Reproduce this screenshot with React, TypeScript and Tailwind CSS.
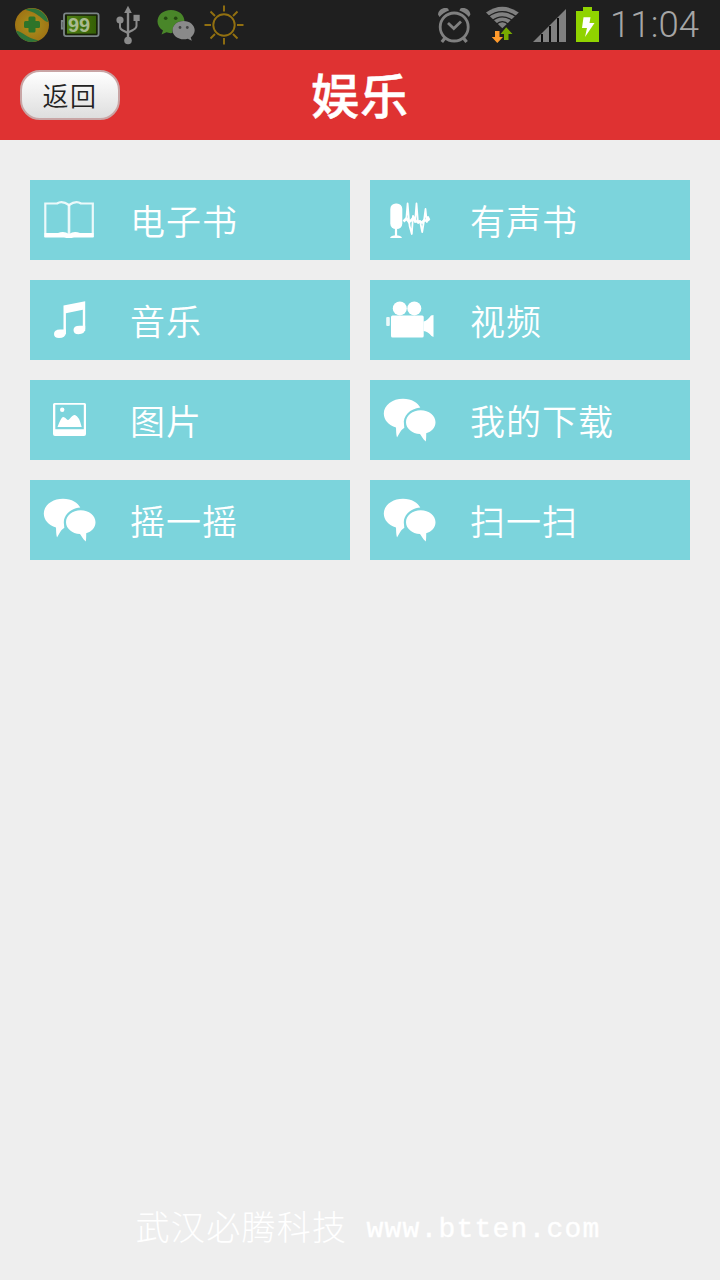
import React from 'react';

interface MenuItem {
  id: string;
  label: string;
  icon: React.ReactNode;
}

function BookIcon() {
  return (
    <svg width="80" height="80" viewBox="0 0 80 80" fill="none" stroke="#fff">
      <path d="M15.3 23.5 H27 Q32 20 39 25 Q46 20 51 23.5 H62.8 V56 H15.3 Z" strokeWidth="2.2" opacity="0.85" />
      <path d="M39 24.5 V55" strokeWidth="2.6" opacity="0.85" />
      <path d="M14.5 53 H28 Q34 50.5 39 54 Q44 50.5 50 53 H63.5 V57.5 H44 Q39 58.6 34 57.5 H14.5 Z" fill="#fff" stroke="none" />
    </svg>
  );
}

function AudioBookIcon() {
  return (
    <svg width="80" height="80" viewBox="0 0 80 80" fill="none" stroke="#fff">
      <rect x="20.3" y="23.5" width="12" height="25.5" rx="5.5" fill="#fff" stroke="none" />
      <path d="M26 48 V57" strokeWidth="2.2" />
      <path d="M20 58 Q21 55.3 26 55.3 Q31 55.3 32 58 Z" fill="#fff" stroke="none" />
      <path
        d="M34 41 L36.4 38 L37.6 23.5 L38.8 38 L39.6 46 L41.8 54 L43 36 L45 42 L46.5 23.5 L48 43 L50 41 L52.2 52 L53.8 42 L55.5 29 L56.8 42 L58 37 L59.5 40"
        strokeWidth="1.8"
        strokeLinejoin="round"
      />
      <path d="M33.5 41.5 L36.5 38.5 L39 42 L41.5 40 L43.5 37.5 L46 41.5 L49 41.5 L52 42.5 L54 40.5 L57 40.5 L59 39.5" strokeWidth="2.6" />
    </svg>
  );
}

function MusicIcon() {
  return (
    <svg width="80" height="80" viewBox="0 0 80 80" fill="#fff">
      <path d="M33.5 25.5 L55.2 21.2 V51 H52.8 V29.8 L35.9 33.3 V54 H33.5 Z" />
      <path d="M24 54 Q24 49.5 30 49.5 H35.9 V53 Q35.5 58 29 58 Q24 58 24 54 Z" />
      <path d="M43.5 50 Q43.5 45.7 49.5 45.7 H55.2 V49 Q54.8 54.2 48.5 54.2 Q43.5 54.2 43.5 50 Z" />
    </svg>
  );
}

function VideoIcon() {
  return (
    <svg width="80" height="80" viewBox="0 0 80 80" fill="#fff">
      <circle cx="29.8" cy="28.4" r="7" />
      <circle cx="44.3" cy="28.4" r="7" />
      <rect x="21" y="35.5" width="32.7" height="22" rx="1.5" />
      <rect x="16.2" y="37" width="3.6" height="9" rx="1" opacity="0.85" />
      <path d="M53.5 41.5 Q57 41 61 35.5 L63.5 35 V57 L61.5 56 Q58 51.5 53.5 51 Z" />
    </svg>
  );
}

function PictureIcon() {
  return (
    <svg width="80" height="80" viewBox="0 0 80 80" fill="#fff">
      <path
        fillRule="evenodd"
        d="M24.5 23 H54.5 Q56 23 56 24.5 V54 Q56 56 54 56 H25 Q23 56 23 54 V24.5 Q23 23 24.5 23 Z M25.3 24.8 V49.3 H53.8 V24.8 Z"
      />
      <circle cx="32.2" cy="29.8" r="2.2" />
      <path d="M27.5 47 Q31 37.5 33 37 Q35 36.8 37 39.5 Q38 40.5 39.5 39 Q43 34.5 45 35 Q49 36 51.7 47 Z" />
    </svg>
  );
}

function ChatIcon() {
  return (
    <svg width="80" height="80" viewBox="0 0 80 80" fill="#fff">
      <path d="M33 18.7 C42 18.7 48 23 50.3 27.5 C40 28.5 32.5 36 34 44.5 L34.3 48 C31.5 49 30.5 52 27 57.5 C26 54 26.2 51 26 47.5 C18.5 45 13.8 40 13.8 33.5 C13.8 25 22.5 18.7 33 18.7 Z" />
      <path d="M50.7 30.3 C59 30.3 65.5 35.6 65.5 42.2 C65.5 47.5 61.5 51.6 56.2 53.3 C56.2 56 56.3 58.5 55.8 61.5 C52.5 59 51.8 56 50 54 C42 53.5 36 48.5 36 42.2 C36 35.6 42.5 30.3 50.7 30.3 Z" />
    </svg>
  );
}

const menuItems: MenuItem[] = [
  { id: 'ebook', label: '电子书', icon: <BookIcon /> },
  { id: 'audiobook', label: '有声书', icon: <AudioBookIcon /> },
  { id: 'music', label: '音乐', icon: <MusicIcon /> },
  { id: 'video', label: '视频', icon: <VideoIcon /> },
  { id: 'picture', label: '图片', icon: <PictureIcon /> },
  { id: 'download', label: '我的下载', icon: <ChatIcon /> },
  { id: 'shake', label: '摇一摇', icon: <ChatIcon /> },
  { id: 'scan', label: '扫一扫', icon: <ChatIcon /> },
];

function NotificationIcons() {
  return (
    <svg width="250" height="50" viewBox="0 0 250 50" fill="none">
      <defs>
        <radialGradient id="shield">
          <stop offset="0" stopColor="#a8921e" />
          <stop offset="1" stopColor="#a07414" />
        </radialGradient>
        <linearGradient id="charge" x1="0" y1="0" x2="1" y2="0">
          <stop offset="0" stopColor="#4f7f16" />
          <stop offset="1" stopColor="#356005" />
        </linearGradient>
      </defs>
      {/* security shield */}
      <circle cx="32" cy="25" r="17" fill="url(#shield)" />
      <path d="M25 9.7 C36 5.5 47 13 48 22 C42 20.5 40 13 25 9.7 Z" fill="#2f7439" />
      <path d="M38.5 40.5 C28 45 18 38 16 30.5 C23 32 26 37.5 38.5 40.5 Z" fill="#2f7439" />
      <rect x="28.5" y="16.5" width="7" height="16" rx="1.5" fill="#2d7429" />
      <rect x="24" y="21" width="16" height="7" rx="1.5" fill="#2d7429" />
      {/* battery level */}
      <rect x="64" y="13.3" width="34.6" height="22.8" rx="2" stroke="#7c8588" strokeWidth="1.8" fill="#182108" />
      <path d="M63.5 21 H61.8 V28.5 H63.5" stroke="#7c8588" strokeWidth="1.8" />
      <rect x="67" y="15.8" width="29" height="17.8" fill="url(#charge)" />
      {/* usb */}
      <g stroke="#8b8b8b" strokeWidth="2">
        <path d="M128 11 V40" strokeWidth="2.4" />
        <path d="M120 21 V27 Q120 29 123 30.5 L128 33" />
        <path d="M136.5 20 V26 Q136.5 28 133 30 L128 32.5" />
      </g>
      <g fill="#8b8b8b">
        <path d="M128 5.7 L131.8 13 H124.2 Z" />
        <circle cx="120" cy="20" r="3.6" />
        <rect x="133.5" y="14.8" width="6.2" height="6.2" />
        <circle cx="128" cy="40.5" r="3.8" />
      </g>
      {/* wechat */}
      <path d="M171 10 C179 10 184.5 15 184.5 21.5 C178 20 171.5 25 172.5 33 C170 33.4 168 32.8 166.5 32.3 L161.5 34.5 L163 30.5 C159.5 28.5 157.5 25 157.5 21.5 C157.5 15 163 10 171 10 Z" fill="#498629" />
      <circle cx="165.7" cy="18.3" r="1.8" fill="#254912" />
      <circle cx="175.7" cy="18.3" r="1.8" fill="#254912" />
      <path d="M183.5 21 C190 21 194.7 25.3 194.7 30.3 C194.7 33.2 193 35.8 190.7 37.5 L191.8 40.7 L187.8 38.8 C180 41 172.5 36.5 172.5 30.3 C172.5 25.3 177 21 183.5 21 Z" fill="#8a8a8a" />
      <circle cx="180" cy="27.5" r="1.4" fill="#454545" />
      <circle cx="187.3" cy="27.5" r="1.4" fill="#454545" />
      {/* brightness */}
      <g stroke="#927010" strokeWidth="1.9">
        <circle cx="224" cy="25" r="10.7" />
        <path d="M224 5.5 V11.5 M224 38 V44.5 M204.5 25 H211 M237 25 H243.5 M210.5 11.5 L215 16 M233 34 L237.5 38.5 M237.5 11.5 L233 16 M215 34 L210.5 38.5" />
      </g>
    </svg>
  );
}

function SystemIcons() {
  return (
    <svg width="170" height="50" viewBox="430 0 170 50" fill="none">
      {/* alarm */}
      <g stroke="#808080">
        <circle cx="454.2" cy="27" r="14" strokeWidth="2.8" />
        <path d="M448 23 L453.8 28.5 L461 21.5" strokeWidth="2.8" />
        <path d="M445 38 L441.8 42 M463.4 38 L466.6 42" strokeWidth="3.2" />
      </g>
      <path d="M439.5 17 L438 14.5 C438.5 10 443 7 448 8.5 L449 10.5 Q443 12.5 439.5 17 Z" fill="#808080" />
      <path d="M468.9 17 L470.4 14.5 C469.9 10 465.4 7 460.4 8.5 L459.4 10.5 Q465.4 12.5 468.9 17 Z" fill="#808080" />
      {/* wifi fan, split into bands by thin dark arcs */}
      <path d="M486 12.5 Q502.3 1 518.8 12.5 L502.3 28.3 Z" fill="#808080" />
      <g stroke="#1f1f1f" strokeWidth="1.3">
        <path d="M488 16.8 Q502.3 6.5 516.6 16.8" />
        <path d="M492 20.8 Q502.3 12.8 512.6 20.8" />
        <path d="M496 24.4 Q502.3 18.8 508.6 24.4" />
      </g>
      <path d="M495 31 H499.5 V37 H503 L497.3 43 L491.7 37 H495 Z" fill="#ff9a2c" />
      <path d="M504 40 H508.5 V34 H512.5 L506.2 27.3 L500.5 34 H504 Z" fill="#78aa00" />
      {/* signal */}
      <path d="M533 42 L566 9 V42 Z" fill="#808080" />
      <path d="M542 34 V42 M550 26 V42 M558 18 V42" stroke="#0c0c0c" strokeWidth="2" />
      {/* charging battery */}
      <path d="M583 7 H592 V11 H599 V42 H576 V11 H583 Z" fill="#90d300" />
      <path d="M583.5 17.2 H590.5 L589.5 23 H594.5 L585 37 L587 28 H582 Z" fill="#fff" />
    </svg>
  );
}

function StatusBar() {
  return (
    <div className="relative flex h-[50px] items-center justify-between bg-[#1f1f1f]">
      <NotificationIcons />
      <span className="absolute left-[68px] top-[14px] font-['Liberation_Sans'] text-[20px] leading-[22px] font-bold text-[#a9ba90]">
        99
      </span>
      <div className="flex h-full items-center">
        <SystemIcons />
        <span className="w-[120px] pl-[10px] font-['Roboto'] text-[36.5px] leading-[50px] font-light tracking-[0.1px] text-[#a6a6a6]">
          11:04
        </span>
      </div>
    </div>
  );
}

export default function App() {
  return (
    <div className="flex h-[1280px] w-[720px] flex-col overflow-hidden bg-[#eeeeee] font-['Noto_Sans_CJK_SC',sans-serif]">
      <StatusBar />

      <header className="grid h-[90px] grid-cols-[1fr_auto_1fr] items-center bg-[#df3232] px-5">
        <button className="h-[50px] w-[100px] rounded-[20px] border-2 border-[#c9a5a5] bg-linear-to-b from-white to-[#dedede] text-[26px] leading-[46px] font-[350] tracking-[1.5px] text-[#222222]">
          返回
        </button>
        <h1 className="pb-1 text-[48px] leading-[86px] font-medium tracking-[1px] text-white [-webkit-text-stroke:0.5px_white]">
          娱乐
        </h1>
      </header>

      <main className="grid flex-1 grid-cols-2 content-start gap-5 px-[30px] pt-10">
        {menuItems.map((item) => (
          <button key={item.id} className="flex h-20 items-center bg-[#7cd4dc] text-left">
            {item.icon}
            <span className="pl-5 text-[35px] leading-[80px] font-[350] tracking-[1px] text-white">
              {item.label}
            </span>
          </button>
        ))}
      </main>

      <footer className="flex h-[104px] items-start justify-center gap-[19px] pl-4 whitespace-nowrap text-white">
        <span className="text-[34px] leading-[100px] font-light tracking-[1.3px]">武汉必腾科技</span>
        <span className="font-['Liberation_Mono'] text-[28px] leading-[108px] tracking-[1.2px] [-webkit-text-stroke:0.4px_white]">
          www.btten.com
        </span>
      </footer>
    </div>
  );
}
